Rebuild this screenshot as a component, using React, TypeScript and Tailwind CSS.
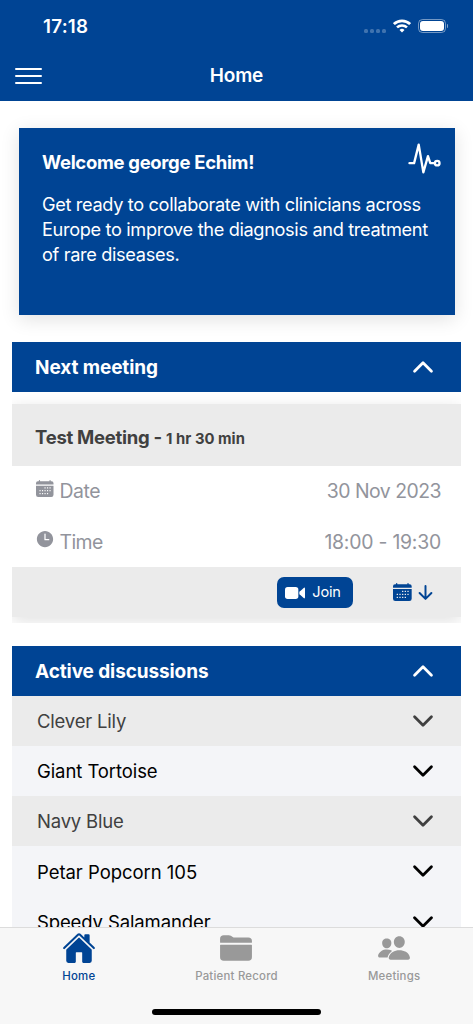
import type { ReactNode } from "react";

import {
  IoArrowDown,
  IoChevronDown,
  IoChevronUp,
  IoFolder,
  IoHome,
  IoPeople,
  IoPulseOutline,
  IoTime,
} from "react-icons/io5";

const discussions = [
  { name: "Clever Lily", tracking: "tracking-[-0.2px]" },
  { name: "Giant Tortoise", tracking: "tracking-[-0.08px]" },
  { name: "Navy Blue", tracking: "tracking-[-0.2px]" },
  { name: "Petar Popcorn 105", tracking: "tracking-[-0.04px]" },
  { name: "Speedy Salamander", tracking: "tracking-[-0.12px]" },
];

const calendarDots = [
  [27, 25], [35, 25], [43, 25],
  [11, 34], [19, 34], [27, 34], [35, 34], [43, 34],
  [11, 43], [19, 43], [27, 43], [35, 43],
];

function CalendarIcon({ className, dotColor }: { className: string; dotColor: string }) {
  return (
    <svg viewBox="0 0 56 54" className={className} fill="currentColor">
      <path d="M0 14V10q0-6 6-6h3V2a2 2 0 0 1 4 0v2h30V2a2 2 0 0 1 4 0v2h3q6 0 6 6v4zM0 18h56v29q0 7-7 7H7q-7 0-7-7z" />
      {calendarDots.map(([x, y]) => (
        <rect key={`${x}-${y}`} x={x} y={y - 2} width="4" height="4" rx="1" fill={dotColor} />
      ))}
    </svg>
  );
}

function VideoIcon({ className }: { className: string }) {
  return (
    <svg viewBox="0 0 60 36" className={className} fill="currentColor">
      <rect width="40" height="36" rx="8" />
      <path d="M43 14C49 11 52 5 57 2q3-1 3 3v26q0 4-3 3c-5-3-8-9-14-12z" />
    </svg>
  );
}

function StatusBar() {
  return (
    <div className="flex h-[51px] items-center justify-between pt-[2px] pr-[25px] pl-[43px]">
      <span className="pt-[1px] text-[18.8px] font-semibold tracking-[0.25px]">17:18</span>
      <div className="flex items-center">
        <div className="mt-[8px] mr-[7px] flex gap-[1.8px] opacity-25">
          <i className="size-[4px] rounded-[1.5px] bg-white" />
          <i className="size-[4px] rounded-[1.5px] bg-white" />
          <i className="size-[4px] rounded-[1.5px] bg-white" />
          <i className="size-[4px] rounded-[1.5px] bg-white" />
        </div>
        <svg viewBox="0 0 18 14" className="mt-[-2px] mr-[7px] h-[14px] w-[18px]" fill="none" stroke="white" strokeWidth="2.7">
          <path d="M.9 5.1a11.6 11.6 0 0 1 16.2 0" />
          <path d="M4 8.4a7.2 7.2 0 0 1 10 0" strokeWidth="2.5" />
          <path d="M9 13.6l-2.5-2.7a3.8 3.8 0 0 1 5 0z" fill="white" stroke="none" />
        </svg>
        <div className="mt-[-2px] h-[14px] w-[28px] rounded-[4.5px] border border-white/45 p-[1px]">
          <div className="h-full rounded-[3px] bg-white" />
        </div>
        <i className="mt-[-2px] ml-[1px] h-[4px] w-[1.5px] rounded-r-full bg-white/50" />
      </div>
    </div>
  );
}

function SectionHeader({ children }: { children: ReactNode }) {
  return (
    <div className="flex h-[50px] items-center justify-between bg-[#004494] px-[23px] text-white">
      <h2 className="pt-[3px] text-[19px] font-bold tracking-[-0.1px]">{children}</h2>
      <IoChevronUp className="size-[30px]" />
    </div>
  );
}

function WelcomeCard() {
  return (
    <section className="mt-[27.5px] mr-[18.5px] ml-[18.5px] h-[186.5px] bg-[#004494] px-[23.5px] pt-[20px] text-white shadow-[0_4px_18px_rgba(0,0,0,0.12)]">
      <div className="flex h-[34px] justify-between">
        <h1 className="pt-[1px] text-[18.5px] leading-[26px] font-bold tracking-[-0.32px]">Welcome george Echim!</h1>
        <IoPulseOutline className="mt-[-8px] mr-[-12px] size-[37px]" />
      </div>
      <p className="mt-[9.5px] text-[18.2px] leading-[25.2px] tracking-[-0.35px] whitespace-nowrap">
        Get ready to collaborate with clinicians across
        <br />
        Europe to improve the diagnosis and treatment
        <br />
        of rare diseases.
      </p>
    </section>
  );
}

function NextMeeting() {
  return (
    <section className="mx-3 mt-[27.5px]">
      <SectionHeader>Next meeting</SectionHeader>
      <div className="overflow-hidden pt-[11.5px] pb-[5.5px]">
        <div className="shadow-[0_4px_16px_rgba(0,0,0,0.12)]">
          <h3 className="flex h-[62.5px] items-center bg-[#ebebeb] pt-[6.5px] pl-[23px] text-[18.5px] font-bold tracking-[-0.27px] text-[#404040]">
            <span>
              Test Meeting - <span className="text-[14.8px] tracking-[0.04px]">1 hr 30 min</span>
            </span>
          </h3>
          <div className="bg-white pr-[20px] pl-[24px] text-[19.4px] text-[#92949c]">
            <div className="flex h-[50.5px] items-center">
              <CalendarIcon className="mt-[-5px] mr-[6px] h-[17px] w-[17.5px]" dotColor="white" />
              <span className="pt-[1px] tracking-[-0.4px]">Date</span>
              <span className="ml-auto pt-[1px] tracking-[-0.5px]">30 Nov 2023</span>
            </div>
            <div className="flex h-[50.5px] items-center">
              <IoTime className="mt-[-5px] mr-[5px] ml-[-1.5px] size-[20px]" />
              <span className="pt-[1px] tracking-[-0.6px]">Time</span>
              <span className="ml-auto pt-[1px] tracking-[-0.22px]">18:00 - 19:30</span>
            </div>
          </div>
          <div className="flex h-[50px] items-start justify-end bg-[#ebebeb] pt-[9.5px] pr-[25.5px] text-[#004494]">
            <button className="flex h-[31px] w-[75.5px] items-center rounded-[7px] bg-[#004494] pt-[1px] pl-[8px] text-[14.6px] tracking-[-0.2px] text-white">
              <VideoIcon className="mr-[7px] h-[12px] w-[20px]" />
              Join
            </button>
            <CalendarIcon className="mt-[6.5px] mr-[3px] ml-[40px] h-[18px] w-[18.7px]" dotColor="#ebebeb" />
            <IoArrowDown className="mt-[5.5px] size-[21px]" />
          </div>
        </div>
      </div>
    </section>
  );
}

function ActiveDiscussions() {
  return (
    <section className="mx-3 mt-[23px]">
      <SectionHeader>Active discussions</SectionHeader>
      <ul>
        {discussions.map(({ name, tracking }) => (
          <li
            key={name}
            className="flex h-[50.25px] items-center justify-between bg-[#f4f5f8] pr-[23px] pl-[25px] text-[18.5px] text-black nth-1:bg-[#ebebeb] nth-1:text-[#404040] nth-3:bg-[#ebebeb] nth-3:text-[#404040]"
          >
            <span className={`pt-[2px] ${tracking}`}>{name}</span>
            <IoChevronDown className="size-[30px]" />
          </li>
        ))}
      </ul>
    </section>
  );
}

function TabBar() {
  return (
    <nav className="relative h-[97px] shrink-0 border-t border-[#dcdcdc] bg-[#f7f7f7] text-[#999]">
      <div className="grid grid-cols-3 pt-[3px] text-[11.4px] leading-[14px] font-medium tracking-[0.22px]">
        <a className="flex flex-col items-center text-[#004494]">
          <IoHome className="size-[34px]" />
          <span className="mt-[4px]">Home</span>
        </a>
        <a className="flex flex-col items-center">
          <IoFolder className="size-[34px]" />
          <span className="mt-[4px]">Patient Record</span>
        </a>
        <a className="flex flex-col items-center">
          <IoPeople className="size-[34px]" />
          <span className="mt-[4px]">Meetings</span>
        </a>
      </div>
      <div className="mx-auto mt-[26px] h-[6px] w-[169px] rounded-full bg-black" />
    </nav>
  );
}

export default function App() {
  return (
    <div className="flex h-[1024px] w-[473px] flex-col overflow-hidden bg-white font-['Inter',sans-serif]">
      <header className="h-[100.5px] shrink-0 bg-[#004494] text-white">
        <StatusBar />
        <div className="grid h-[50px] grid-cols-3 items-center px-[15px]">
          <div className="flex w-[27px] flex-col gap-[5px]">
            <i className="h-[2px] rounded-full bg-white" />
            <i className="h-[2px] rounded-full bg-white" />
            <i className="h-[2px] rounded-full bg-white" />
          </div>
          <span className="pt-[1px] text-center text-[19px] font-semibold tracking-[-0.2px]">Home</span>
        </div>
      </header>
      <main className="min-h-0 flex-1 overflow-hidden">
        <WelcomeCard />
        <NextMeeting />
        <ActiveDiscussions />
      </main>
      <TabBar />
    </div>
  );
}
